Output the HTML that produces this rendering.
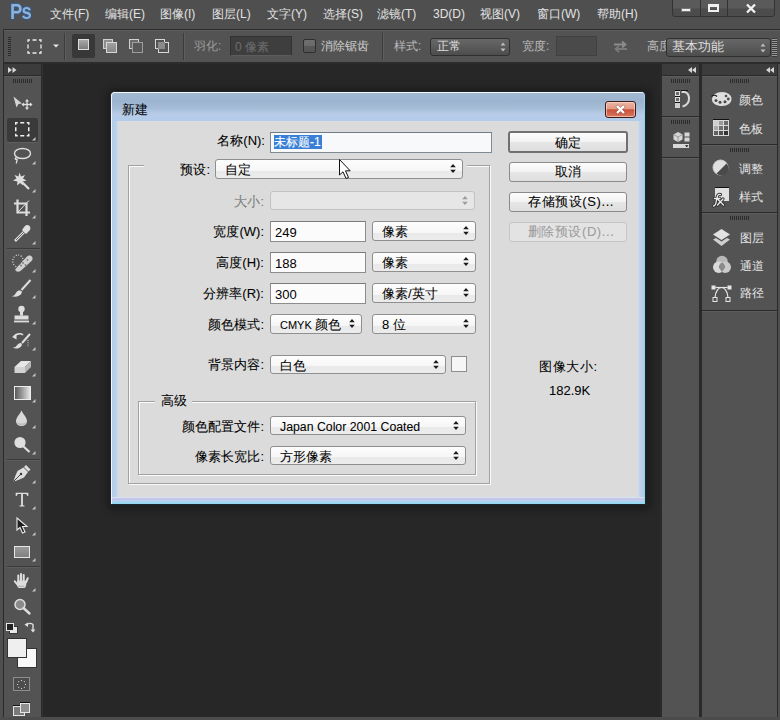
<!DOCTYPE html>
<html><head><meta charset="utf-8"><style>
*{margin:0;padding:0;box-sizing:border-box}
html,body{width:780px;height:720px;overflow:hidden;background:#4f4f4f;font-family:"Liberation Sans",sans-serif;}
.a{position:absolute}
.t{position:absolute;white-space:nowrap;line-height:1}
.mi{position:absolute;top:8px;font-size:12px;color:#e2e2e2;line-height:12px;white-space:nowrap}
.ot{position:absolute;font-size:12px;line-height:12px;color:#c4c4c4;white-space:nowrap}
.lbl{position:absolute;font-size:13px;line-height:13px;color:#000;text-align:right;white-space:nowrap;-webkit-text-stroke:0.08px #000}
.dt{position:absolute;font-size:13px;line-height:13px;color:#000;white-space:nowrap;-webkit-text-stroke:0.05px #000}
.lat{font-size:12px;-webkit-text-stroke:0}
.inp{position:absolute;background:#fbfbfb;border:1px solid #8c8c8c;border-top-color:#7a7a7a}
.sel{position:absolute;border:1px solid #8f8f8f;border-radius:3px;background:linear-gradient(#fdfdfd 0%,#f6f6f6 60%,#e9e9e9 62%,#ececec 100%)}
.btn{position:absolute;border:1px solid #8a8a8a;border-radius:3px;background:linear-gradient(#fcfcfc 0%,#f2f2f2 50%,#e6e6e6 51%,#dfdfdf 100%)}
.grp{position:absolute;border:1px solid #a2a2a2;box-shadow:inset 1px 1px 0 #fafafa,1px 1px 0 #fafafa}
.pl{position:absolute;font-size:12px;line-height:12px;color:#e4e4e4;white-space:nowrap}
svg{position:absolute;overflow:visible}
</style></head><body>
<div class="t" style="left:10px;top:2px;font-size:21.5px;font-weight:bold;color:#8cb0da;letter-spacing:-1px;transform:scaleX(0.86);text-shadow:1px 0 0 #2f5683,-1px 0 0 #2f5683,0 1px 0 #2f5683,0 -1px 0 #3b628e;transform-origin:0 0">Ps</div>
<div class="mi" style="left:50px">文件(F)</div>
<div class="mi" style="left:105px">编辑(E)</div>
<div class="mi" style="left:160px">图像(I)</div>
<div class="mi" style="left:212px">图层(L)</div>
<div class="mi" style="left:267px">文字(Y)</div>
<div class="mi" style="left:323px">选择(S)</div>
<div class="mi" style="left:377px">滤镜(T)</div>
<div class="mi" style="left:433px">3D(D)</div>
<div class="mi" style="left:480px">视图(V)</div>
<div class="mi" style="left:537px">窗口(W)</div>
<div class="mi" style="left:597px">帮助(H)</div>
<div class="a" style="left:672px;top:-1px;width:103px;height:18px;border:1px solid #333;border-radius:0 0 3px 3px;background:linear-gradient(#5a5a5a 0,#5a5a5a 8px,#4c4c4c 9px,#4c4c4c 100%)"></div>
<div class="a" style="left:700px;top:0px;width:1px;height:16px;background:#333"></div>
<div class="a" style="left:727px;top:0px;width:1px;height:16px;background:#333"></div>
<div class="a" style="left:681px;top:8px;width:10px;height:4px;background:#f0f0f0;border:1px solid #777"></div>
<div class="a" style="left:708px;top:4px;width:11px;height:8px;border:2px solid #f0f0f0;border-top-width:3px"></div>
<svg style="left:745px;top:3px;" width="12" height="11" viewBox="0 0 12 11"><path d="M2 1.5L10 9.5M10 1.5L2 9.5" stroke="#f2f2f2" stroke-width="2.4"/></svg>
<div class="a" style="left:3px;top:29px;width:777px;height:35px;background:#535353;border-top:1px solid #2c2c2c;border-left:1px solid #2c2c2c;border-bottom:2px solid #2c2c2c;box-shadow:inset 0 1px 0 #5d5d5d"></div>
<div class="a" style="left:8px;top:37px;width:3px;height:20px;background:repeating-linear-gradient(#2a2a2a 0 1px,transparent 1px 2px)"></div>
<svg style="left:27px;top:39px;" width="15" height="15" viewBox="0 0 15 15"><rect x="1" y="1" width="13" height="13" fill="none" stroke="#ececec" stroke-width="1.3" stroke-dasharray="4 2.5" stroke-dashoffset="2"/></svg>
<svg style="left:53px;top:44px;" width="6" height="4" viewBox="0 0 6 4"><path d="M0 0.5H6L3 3.5Z" fill="#e6e6e6"/></svg>
<div class="a" style="left:64px;top:33px;width:1px;height:27px;background:#3c3c3c;box-shadow:1px 0 0 #5e5e5e"></div>
<div class="a" style="left:72px;top:34px;width:23px;height:24px;background:#383838;border-radius:2px"></div>
<div class="a" style="left:78px;top:39px;width:11px;height:11px;border:1px solid #dedede;background:linear-gradient(#a8a8a8,#7c7c7c)"></div>
<div class="a" style="left:103px;top:39px;width:10px;height:10px;border:1px solid #d0d0d0;background:#8e8e8e"></div>
<div class="a" style="left:106px;top:42px;width:11px;height:11px;border:1px solid #d8d8d8;background:linear-gradient(#a0a0a0,#888)"></div>
<div class="a" style="left:129px;top:39px;width:10px;height:10px;border:1px solid #d0d0d0;background:#6c6c6c"></div>
<div class="a" style="left:132px;top:42px;width:11px;height:11px;border:1px solid #9c9c9c;background:#585858"></div>
<div class="a" style="left:155px;top:39px;width:10px;height:10px;border:1px solid #d8d8d8"></div>
<div class="a" style="left:158px;top:42px;width:11px;height:11px;border:1px solid #d8d8d8"></div>
<div class="a" style="left:158px;top:42px;width:7px;height:7px;background:#8a8a8a"></div>
<div class="a" style="left:183px;top:33px;width:1px;height:27px;background:#3c3c3c;box-shadow:1px 0 0 #5e5e5e"></div>
<div class="ot" style="left:194px;top:40px;color:#9c9c9c">羽化:</div>
<div class="a" style="left:230px;top:36px;width:62px;height:20px;background:#3e3e3e;border:1px solid #323232;border-bottom-color:#5c5c5c"></div>
<div class="ot" style="left:235px;top:41px;color:#6c6c6c">0 像素</div>
<div class="a" style="left:303px;top:39px;width:13px;height:14px;border:1px solid #2e2e2e;border-radius:2px;background:linear-gradient(#6e6e6e 0,#6a6a6a 50%,#575757 51%,#555 100%)"></div>
<div class="ot" style="left:321px;top:40px;color:#d0d0d0">消除锯齿</div>
<div class="a" style="left:382px;top:33px;width:1px;height:27px;background:#3c3c3c;box-shadow:1px 0 0 #5e5e5e"></div>
<div class="ot" style="left:394px;top:40px;color:#bababa">样式:</div>
<div class="a" style="left:430px;top:38px;width:80px;height:18px;border:1px solid #2f2f2f;border-radius:3px;background:linear-gradient(#676767,#4d4d4d)"></div>
<div class="ot" style="left:437px;top:40px;color:#dedede">正常</div>
<svg style="left:500px;top:42px;" width="6" height="10" viewBox="0 0 6 10"><path d="M3 0.5L5.5 3.5H0.5Z M3 9.5L5.5 6.5H0.5Z" fill="#bdbdbd"/></svg>
<div class="ot" style="left:522px;top:40px;color:#bababa">宽度:</div>
<div class="a" style="left:556px;top:36px;width:41px;height:20px;background:#4a4a4a;border:1px solid #404040"></div>
<svg style="left:613px;top:40px;" width="15" height="13" viewBox="0 0 15 13"><path d="M1 4.5H12M9 1.5L12.5 4.5L9 7.5" fill="none" stroke="#8c8c8c" stroke-width="1.8"/><path d="M14 9H3M6 6L2.5 9L6 12" fill="none" stroke="#7a7a7a" stroke-width="1.8"/></svg>
<div class="ot" style="left:647px;top:40px;color:#bababa">高度</div>
<div class="a" style="left:666px;top:38px;width:105px;height:19px;border:1px solid #2f2f2f;border-radius:3px;background:linear-gradient(#676767,#4d4d4d)"></div>
<div class="ot" style="left:672px;top:40px;color:#dedede;font-size:13px;line-height:13px">基本功能</div>
<svg style="left:760px;top:43px;" width="6" height="10" viewBox="0 0 6 10"><path d="M3 0.5L5.5 3.5H0.5Z M3 9.5L5.5 6.5H0.5Z" fill="#bdbdbd"/></svg>
<div class="a" style="left:772px;top:38px;width:5px;height:19px;background:repeating-linear-gradient(#3a3a3a 0 1px,#9a9a9a 1px 2px)"></div>
<div class="a" style="left:41px;top:64px;width:620px;height:653px;background:#272727"></div>
<div class="a" style="left:42px;top:64px;width:1px;height:653px;background:#323232"></div>
<div class="a" style="left:3px;top:64px;width:39px;height:654px;background:#2a2a2a"></div>
<div class="a" style="left:4px;top:64px;width:37px;height:11px;background:#3c3c3c"></div>
<svg style="left:8px;top:67px;" width="9" height="6" viewBox="0 0 9 6"><path d="M0 0L4 3L0 6Z M4.5 0L8.5 3L4.5 6Z" fill="#d6d6d6"/></svg>
<div class="a" style="left:4px;top:76px;width:37px;height:641px;background:#535353;border-top:1px solid #5d5d5d"></div>
<div class="a" style="left:13px;top:79px;width:19px;height:4px;background:repeating-linear-gradient(90deg,#2c2c2c 0 1px,transparent 1px 2px)"></div>
<svg style="left:13px;top:96px;" width="20" height="15" viewBox="0 0 20 15"><path d="M0.5 0.5L9 7.5L5.5 8L3.5 11.5Z" fill="#d4d4d4"/><path d="M14 4V13M9.5 8.5H18.5" stroke="#dedede" stroke-width="1.3"/><path d="M14 3L12 5.5H16Z M14 14L12 11.5H16Z M8.5 8.5L11 6.5V10.5Z M19.5 8.5L17 6.5V10.5Z" fill="#dedede"/></svg>
<div class="a" style="left:7px;top:118px;width:31px;height:24px;background:#3a3a3a;border-radius:2px;box-shadow:0 1px 0 #5f5f5f"></div>
<svg style="left:15px;top:122px;" width="15" height="15" viewBox="0 0 15 15"><rect x="0.75" y="0.75" width="13" height="13" fill="none" stroke="#f0f0f0" stroke-width="1.5" stroke-dasharray="4 2.5" stroke-dashoffset="2"/></svg>
<svg style="left:32px;top:137px;" width="4" height="4" viewBox="0 0 4 4"><path d="M3.5 0V3.5H0Z" fill="#c4c4c4"/></svg>
<svg style="left:12px;top:147px;" width="20" height="18" viewBox="0 0 20 18"><ellipse cx="10.5" cy="6.5" rx="8" ry="5" fill="none" stroke="#dedede" stroke-width="1.4"/><path d="M4 10.5C2 12 4.5 13.5 5 12C5.5 14 4 15 4.5 16.5" fill="none" stroke="#dedede" stroke-width="1.3"/></svg>
<svg style="left:32px;top:161px;" width="4" height="4" viewBox="0 0 4 4"><path d="M3.5 0V3.5H0Z" fill="#c4c4c4"/></svg>
<svg style="left:12px;top:172px;" width="22" height="20" viewBox="0 0 22 20"><path d="M7.5 0.5L9 4.5L13 3L11 6.5L14.5 8.5L10.5 9.5L11 13.5L8 11L5 13.5L5.5 9.5L1 8.5L4.5 6.5L2.5 3L6.5 4.5Z" fill="#dedede"/><path d="M10 10L17 17" stroke="#dedede" stroke-width="2.2"/></svg>
<svg style="left:32px;top:189px;" width="4" height="4" viewBox="0 0 4 4"><path d="M3.5 0V3.5H0Z" fill="#c4c4c4"/></svg>
<svg style="left:13px;top:199px;" width="18" height="18" viewBox="0 0 18 18"><path d="M4.5 0.5V13.5H17M1 4.5H13.5V17" fill="none" stroke="#dedede" stroke-width="2.2"/><path d="M5 13L16 1.5" stroke="#dedede" stroke-width="1"/></svg>
<svg style="left:32px;top:215px;" width="4" height="4" viewBox="0 0 4 4"><path d="M3.5 0V3.5H0Z" fill="#c4c4c4"/></svg>
<svg style="left:13px;top:224px;" width="19" height="20" viewBox="0 0 19 20"><path d="M2 17L11 8" stroke="#dedede" stroke-width="2.6"/><path d="M3 16L11 8" stroke="#535353" stroke-width="0.9"/><path d="M9 6L13 10L16.5 6.5C18 5 17.5 2.5 16 1.5C14.5 0.5 12.5 1 11.5 2.5Z" fill="#dedede"/></svg>
<svg style="left:32px;top:241px;" width="4" height="4" viewBox="0 0 4 4"><path d="M3.5 0V3.5H0Z" fill="#c4c4c4"/></svg>
<div class="a" style="left:7px;top:248px;width:33px;height:1px;background:#3a3a3a;box-shadow:0 1px 0 #5c5c5c"></div>
<svg style="left:12px;top:254px;" width="22" height="18" viewBox="0 0 22 18"><ellipse cx="6" cy="7" rx="5.2" ry="6" fill="none" stroke="#dedede" stroke-width="1.2" stroke-dasharray="1 1.6"/><path d="M4 14.5L15 2.5C16.5 1 19 1.5 20 2.8C21 4 20.8 5.8 19.5 7L8.5 17C7 18.2 4.8 18 3.8 16.8C3 15.8 3.2 15.3 4 14.5Z" fill="#cfcfcf"/><g fill="#7a7a7a"><circle cx="11" cy="9" r="0.9"/><circle cx="13.5" cy="11" r="0.9"/><circle cx="9" cy="11.5" r="0.9"/><circle cx="15.5" cy="6" r="0.9"/></g></svg>
<svg style="left:32px;top:269px;" width="4" height="4" viewBox="0 0 4 4"><path d="M3.5 0V3.5H0Z" fill="#c4c4c4"/></svg>
<svg style="left:11px;top:279px;" width="22" height="19" viewBox="0 0 22 19"><path d="M19.5 1L10.5 11" stroke="#dedede" stroke-width="2"/><path d="M9 11.5C6 11 5 14 4 15.5C3 16.8 1.5 17 0.5 17C4 18.5 9 17.5 10.5 14.5C11.5 12.8 10.5 11.5 9 11.5Z" fill="#dedede"/></svg>
<svg style="left:32px;top:295px;" width="4" height="4" viewBox="0 0 4 4"><path d="M3.5 0V3.5H0Z" fill="#c4c4c4"/></svg>
<svg style="left:13px;top:305px;" width="18" height="19" viewBox="0 0 18 19"><circle cx="8.5" cy="4" r="3.2" fill="#dedede"/><path d="M7 6H10V10.5H7Z" fill="#dedede"/><path d="M1.5 10.5H15.5V14.5H1.5Z" fill="#dedede"/><path d="M1 16.5H16" stroke="#dedede" stroke-width="1.8"/></svg>
<svg style="left:32px;top:321px;" width="4" height="4" viewBox="0 0 4 4"><path d="M3.5 0V3.5H0Z" fill="#c4c4c4"/></svg>
<svg style="left:11px;top:332px;" width="22" height="18" viewBox="0 0 22 18"><path d="M3 4.5C5 1.5 10 1 12 3" fill="none" stroke="#dedede" stroke-width="1.6"/><path d="M1 5L5.5 2V7.5Z" fill="#dedede"/><path d="M19 2L11 11" stroke="#dedede" stroke-width="2"/><path d="M9.5 11C7 11 6 13.5 5 14.5C4 15.5 2.8 15.8 1.5 15.5C4.5 17.5 9 16.5 10.5 14C11.3 12.5 10.8 11 9.5 11Z" fill="#dedede"/><path d="M17 8V15" stroke="#dedede" stroke-width="1" stroke-dasharray="1 1.3"/></svg>
<svg style="left:32px;top:347px;" width="4" height="4" viewBox="0 0 4 4"><path d="M3.5 0V3.5H0Z" fill="#c4c4c4"/></svg>
<svg style="left:13px;top:358px;" width="20" height="17" viewBox="0 0 20 17"><path d="M1.5 9L8 3H18L12 9Z" fill="#e6e6e6"/><path d="M1.5 9H12V15H1.5Z" fill="#d2d2d2"/><path d="M12 9L18 3V9L12 15Z" fill="#b6b6b6"/></svg>
<svg style="left:32px;top:373px;" width="4" height="4" viewBox="0 0 4 4"><path d="M3.5 0V3.5H0Z" fill="#c4c4c4"/></svg>
<div class="a" style="left:14px;top:386px;width:17px;height:14px;border:1.5px solid #ececec;background:linear-gradient(90deg,#5a5a5a,#9e9e9e 50%,#e6e6e6)"></div>
<svg style="left:32px;top:399px;" width="4" height="4" viewBox="0 0 4 4"><path d="M3.5 0V3.5H0Z" fill="#c4c4c4"/></svg>
<svg style="left:15px;top:410px;" width="13" height="17" viewBox="0 0 13 17"><path d="M6.5 0.5C5 4 1 7.5 1 11C1 14 3.5 16 6.5 16C9.5 16 12 14 12 11C12 7.5 8 4 6.5 0.5Z" fill="#d8d8d8"/><path d="M2 11.5C3 14 10 14 11 11.5C11 14 9 15.5 6.5 15.5C4 15.5 2 14 2 11.5Z" fill="#bdbdbd"/></svg>
<svg style="left:32px;top:425px;" width="4" height="4" viewBox="0 0 4 4"><path d="M3.5 0V3.5H0Z" fill="#c4c4c4"/></svg>
<svg style="left:14px;top:436px;" width="18" height="18" viewBox="0 0 18 18"><circle cx="6" cy="6.5" r="5.6" fill="#dedede"/><path d="M9 10L15.5 16" stroke="#dedede" stroke-width="2.2"/></svg>
<svg style="left:32px;top:451px;" width="4" height="4" viewBox="0 0 4 4"><path d="M3.5 0V3.5H0Z" fill="#c4c4c4"/></svg>
<div class="a" style="left:7px;top:459px;width:33px;height:1px;background:#3a3a3a;box-shadow:0 1px 0 #5c5c5c"></div>
<svg style="left:12px;top:464px;" width="20" height="19" viewBox="0 0 20 19"><path d="M14 1L18.5 5.5L16.5 7.5L12 3Z" fill="#dedede"/><path d="M11.5 3.5L16 8L12 13.5C9 15 5 16.5 1.5 17.5C2.5 14 4 10 5.5 7Z" fill="#dedede"/><path d="M1.5 17.5L8.5 10.5" stroke="#444" stroke-width="1"/><circle cx="9" cy="10" r="1.2" fill="#333"/></svg>
<svg style="left:32px;top:480px;" width="4" height="4" viewBox="0 0 4 4"><path d="M3.5 0V3.5H0Z" fill="#c4c4c4"/></svg>
<svg style="left:15px;top:492px;" width="14" height="15" viewBox="0 0 14 15"><path d="M0.7 0.7H13.3V4H12.3C12 2.5 11.5 1.9 10 1.9H7.9V12.8C7.9 13.3 8.3 13.5 9.5 13.6V14.4H4.5V13.6C5.7 13.5 6.1 13.3 6.1 12.8V1.9H4C2.5 1.9 2 2.5 1.7 4H0.7Z" fill="#dedede"/></svg>
<svg style="left:32px;top:506px;" width="4" height="4" viewBox="0 0 4 4"><path d="M3.5 0V3.5H0Z" fill="#c4c4c4"/></svg>
<svg style="left:16px;top:517px;" width="12" height="17" viewBox="0 0 12 17"><path d="M1 1V13L4 10.5L6.5 16L9 15L6.5 9.5H11Z" fill="#1e1e1e" stroke="#e8e8e8" stroke-width="1.1"/></svg>
<svg style="left:32px;top:532px;" width="4" height="4" viewBox="0 0 4 4"><path d="M3.5 0V3.5H0Z" fill="#c4c4c4"/></svg>
<div class="a" style="left:14px;top:546px;width:16px;height:12px;border:1.5px solid #e6e6e6;background:linear-gradient(#999,#808080)"></div>
<svg style="left:32px;top:558px;" width="4" height="4" viewBox="0 0 4 4"><path d="M3.5 0V3.5H0Z" fill="#c4c4c4"/></svg>
<div class="a" style="left:7px;top:566px;width:33px;height:1px;background:#3a3a3a;box-shadow:0 1px 0 #5c5c5c"></div>
<svg style="left:13px;top:572px;" width="18" height="18" viewBox="0 0 18 18"><g stroke="#dedede" stroke-width="2" stroke-linecap="round"><path d="M5.3 9V3.5M8 8.5V2M10.7 8.5V3M13.2 10L14.8 6.2M4.5 12.5L1.8 9.3"/></g><path d="M4.2 8.5H13.8L13 14C12.6 15.3 12 16 11 16H6C5 16 4.5 15 4 13.5Z" fill="#dedede"/><path d="M5 14.3H11.5" stroke="#9a9a9a" stroke-width="0.8"/></svg>
<svg style="left:32px;top:588px;" width="4" height="4" viewBox="0 0 4 4"><path d="M3.5 0V3.5H0Z" fill="#c4c4c4"/></svg>
<svg style="left:14px;top:598px;" width="18" height="18" viewBox="0 0 18 18"><circle cx="6" cy="6.5" r="5" fill="#8a8a8a" stroke="#dedede" stroke-width="1.5"/><path d="M9.5 10L15.5 15.5" stroke="#dedede" stroke-width="2.4" stroke-linecap="round"/></svg>
<div class="a" style="left:9px;top:626px;width:9px;height:8px;background:#e8e8e8;border:1px solid #3a3a3a"></div>
<div class="a" style="left:6px;top:623px;width:8px;height:8px;background:#222;border:1.5px solid #e6e6e6"></div>
<svg style="left:24px;top:621px;" width="12" height="12" viewBox="0 0 12 12"><path d="M2 4.5C4 2 7 2 9 3.5V9" fill="none" stroke="#dedede" stroke-width="1.4"/><path d="M0.5 3.5L4 1.5V6Z M9 11.5L6.5 8.5H11.5Z" fill="#dedede"/></svg>
<div class="a" style="left:17px;top:648px;width:20px;height:20px;background:#f8f8f8;border:1px solid #333"></div>
<div class="a" style="left:7px;top:638px;width:20px;height:20px;background:#efefef;border:1px solid #333"></div>
<div class="a" style="left:13px;top:677px;width:17px;height:14px;background:#4c4c4c;border:1px solid #8e8e8e"></div>
<svg style="left:16px;top:679px;" width="11" height="11" viewBox="0 0 11 11"><g fill="#dcdcdc"><rect x="9.00" y="5.00" width="1" height="1"/><rect x="7.83" y="7.83" width="1" height="1"/><rect x="5.00" y="9.00" width="1" height="1"/><rect x="2.17" y="7.83" width="1" height="1"/><rect x="1.00" y="5.01" width="1" height="1"/><rect x="2.17" y="2.18" width="1" height="1"/><rect x="4.99" y="1.00" width="1" height="1"/><rect x="7.82" y="2.16" width="1" height="1"/></g></svg>
<div class="a" style="left:20px;top:703px;width:10px;height:10px;border:1.5px solid #e6e6e6;background:#8a8a8a;box-shadow:0 -1px 0 #111"></div>
<div class="a" style="left:13px;top:706px;width:12px;height:10px;border:1.5px solid #e6e6e6;background:#7a7a7a;box-shadow:0 -1px 0 #111"></div>
<div class="a" style="left:20px;top:703px;width:10px;height:10px;border:1.5px solid #e6e6e6;background:#8f8f8f"></div>
<div class="a" style="left:660px;top:64px;width:118px;height:654px;background:#2a2a2a"></div>
<div class="a" style="left:662px;top:64px;width:37px;height:11px;background:#3c3c3c"></div>
<div class="a" style="left:702px;top:64px;width:75px;height:11px;background:#3c3c3c"></div>
<svg style="left:688px;top:67px;" width="8" height="6" viewBox="0 0 8 6"><path d="M4 0L0 3L4 6Z M8 0L4 3L8 6Z" fill="#d6d6d6"/></svg>
<svg style="left:766px;top:67px;" width="8" height="6" viewBox="0 0 8 6"><path d="M4 0L0 3L4 6Z M8 0L4 3L8 6Z" fill="#d6d6d6"/></svg>
<div class="a" style="left:662px;top:76px;width:37px;height:40px;background:#535353;border-top:1px solid #5d5d5d"></div>
<div class="a" style="left:671px;top:79px;width:19px;height:4px;background:repeating-linear-gradient(90deg,#2c2c2c 0 1px,transparent 1px 2px)"></div>
<div class="a" style="left:662px;top:117px;width:37px;height:40px;background:#535353;border-top:1px solid #5d5d5d"></div>
<div class="a" style="left:671px;top:120px;width:19px;height:4px;background:repeating-linear-gradient(90deg,#2c2c2c 0 1px,transparent 1px 2px)"></div>
<div class="a" style="left:662px;top:158px;width:37px;height:559px;background:#535353;border-top:1px solid #5d5d5d"></div>
<div class="a" style="left:702px;top:76px;width:75px;height:68px;background:#535353;border-top:1px solid #5d5d5d"></div>
<div class="a" style="left:730px;top:79px;width:19px;height:4px;background:repeating-linear-gradient(90deg,#2c2c2c 0 1px,transparent 1px 2px)"></div>
<div class="a" style="left:702px;top:145px;width:75px;height:67px;background:#535353;border-top:1px solid #5d5d5d"></div>
<div class="a" style="left:730px;top:148px;width:19px;height:4px;background:repeating-linear-gradient(90deg,#2c2c2c 0 1px,transparent 1px 2px)"></div>
<div class="a" style="left:702px;top:213px;width:75px;height:97px;background:#535353;border-top:1px solid #5d5d5d"></div>
<div class="a" style="left:730px;top:216px;width:19px;height:4px;background:repeating-linear-gradient(90deg,#2c2c2c 0 1px,transparent 1px 2px)"></div>
<div class="a" style="left:702px;top:311px;width:75px;height:406px;background:#535353;border-top:1px solid #5d5d5d"></div>
<div class="a" style="left:675px;top:91px;width:5px;height:5px;border:1px solid #e0e0e0;background:#6a6a6a;box-shadow:0 -1px 0 #111"></div>
<div class="a" style="left:675px;top:97px;width:5px;height:5px;border:1px solid #e0e0e0;background:#6a6a6a;box-shadow:0 -1px 0 #111"></div>
<div class="a" style="left:675px;top:103px;width:5px;height:5px;background:#cfcfcf;box-shadow:0 -1px 0 #111"></div>
<svg style="left:680px;top:89px;" width="11" height="20" viewBox="0 0 11 20"><path d="M1 1.5H8" stroke="#151515" stroke-width="1"/><path d="M1.5 3H5C7.5 4 9 6.5 9 9.5C9 13.5 6 16.5 2.5 17.5" fill="none" stroke="#d8d8d8" stroke-width="2"/></svg>
<svg style="left:673px;top:131px;" width="19" height="18" viewBox="0 0 19 18"><path d="M5 1L9.5 3.5V8.5L5 11L0.5 8.5V3.5Z" fill="#d6d6d6"/><path d="M5 6V11M0.5 3.5L5 6L9.5 3.5" stroke="#8a8a8a" stroke-width="0.8" fill="none"/><rect x="11.5" y="1.5" width="5" height="4" fill="#d6d6d6"/><rect x="11.5" y="6.5" width="5" height="4" fill="#d6d6d6"/><rect x="0" y="13" width="16" height="4" fill="#d8d8d8"/><path d="M12 14.2H15.5L13.75 16.2Z" fill="#111"/></svg>
<svg style="left:711px;top:91px;" width="21" height="16" viewBox="0 0 21 16"><path d="M1 8.5C1 4 5.5 1 11 1C16.5 1 20.5 4 20.5 8C20.5 12 16.5 15 11 15C5.5 15 1 12.5 1 8.5Z" fill="#dedede"/><path d="M0.5 5.5C2 4 4.5 4 6 5.5" fill="none" stroke="#1c1c1c" stroke-width="1.2"/><g fill="#4a4a4a"><circle cx="5" cy="9.5" r="1.5"/><circle cx="9" cy="11.3" r="1.5"/><circle cx="14" cy="10.8" r="1.5"/><circle cx="17.3" cy="8" r="1.4"/><circle cx="15" cy="5" r="1.3"/></g></svg>
<div class="pl" style="left:739px;top:94px">颜色</div>
<div class="a" style="left:713px;top:119px;width:16px;height:17px;background:#d8d8d8;border-top:1px solid #111"></div>
<div class="a" style="left:714px;top:121px;width:4px;height:4px;background:#d0d0d0"></div>
<div class="a" style="left:719px;top:121px;width:4px;height:4px;background:#9a9a9a"></div>
<div class="a" style="left:724px;top:121px;width:4px;height:4px;background:#6a6a6a"></div>
<div class="a" style="left:714px;top:126px;width:4px;height:4px;background:#a8a8a8"></div>
<div class="a" style="left:719px;top:126px;width:4px;height:4px;background:#707070"></div>
<div class="a" style="left:724px;top:126px;width:4px;height:4px;background:#5a5a5a"></div>
<div class="a" style="left:714px;top:131px;width:4px;height:4px;background:#606060"></div>
<div class="a" style="left:719px;top:131px;width:4px;height:4px;background:#505050"></div>
<div class="a" style="left:724px;top:131px;width:4px;height:4px;background:#333333"></div>
<div class="pl" style="left:739px;top:123px">色板</div>
<svg style="left:712px;top:159px;" width="17" height="17" viewBox="0 0 17 17"><circle cx="8.5" cy="8.5" r="7.5" fill="#e0e0e0" stroke="#cfcfcf" stroke-width="1"/><path d="M14.5 4.5A6.3 6.3 0 0 1 4.5 14.5Z" fill="#4a4a4a"/></svg>
<div class="pl" style="left:739px;top:163px">调整</div>
<div class="a" style="left:715px;top:187px;width:14px;height:14px;background:#e0e0e0;border-top:1px solid #111"></div>
<svg style="left:708px;top:182px;" width="20" height="28" viewBox="0 0 20 28"><g fill="none" stroke-linecap="round"><path d="M5.5 24C7 24 8 22 8.5 18L9.5 14C10 12.5 11 12 12.5 12.5M6.5 16.5H12M9.5 17L15.5 23M15 17L9.5 23" stroke="#333" stroke-width="3.2"/><path d="M5.5 24C7 24 8 22 8.5 18L9.5 14C10 12.5 11 12 12.5 12.5M6.5 16.5H12M9.5 17L15.5 23M15 17L9.5 23" stroke="#ececec" stroke-width="1.3"/></g></svg>
<div class="pl" style="left:739px;top:191px">样式</div>
<svg style="left:712px;top:228px;" width="19" height="19" viewBox="0 0 19 19"><path d="M1 11.5L4 10L9.5 13.5L15 10L18 11.5L9.5 18Z" fill="#cfcfcf"/><path d="M1 6.5L9.5 1L18 6.5L9.5 12Z" fill="#e2e2e2"/></svg>
<div class="pl" style="left:740px;top:232px">图层</div>
<svg style="left:713px;top:255px;" width="18" height="19" viewBox="0 0 18 19"><circle cx="9" cy="6.5" r="5.8" fill="#b8b8b8" stroke="#2a2a2a" stroke-width="0.8" stroke-dasharray="0 3 12 40"/><circle cx="5.8" cy="12.2" r="5.8" fill="#dadada"/><circle cx="12.2" cy="12.2" r="5.8" fill="#cacaca"/><path d="M9 7.5C7 8.5 6 10 5.8 12.5C7 14 8 15.5 9 17C10 15.5 11 14 12.2 12.5C12 10 11 8.5 9 7.5Z" fill="#8a8a8a"/></svg>
<div class="pl" style="left:740px;top:260px">通道</div>
<svg style="left:711px;top:285px;" width="22" height="17" viewBox="0 0 22 17"><rect x="0.5" y="0.5" width="4" height="4" fill="#e6e6e6"/><rect x="16.5" y="0.5" width="4" height="4" fill="#e6e6e6"/><path d="M4.5 2.5H16.5" stroke="#e6e6e6" stroke-width="1.2"/><path d="M4 12.5C4.5 6 7.5 2.5 10.5 2.5C13.5 2.5 16.5 6 17 12.5" fill="none" stroke="#e6e6e6" stroke-width="1.2"/><rect x="2" y="12.5" width="4" height="4" fill="none" stroke="#e6e6e6" stroke-width="1"/><rect x="15" y="12.5" width="4" height="4" fill="none" stroke="#e6e6e6" stroke-width="1"/></svg>
<div class="pl" style="left:740px;top:287px">路径</div>
<div class="a" style="left:106px;top:88px;width:546px;height:423px;border-radius:8px;background:rgba(0,0,0,0.25);filter:blur(3px)"></div>
<div class="a" style="left:110px;top:91px;width:536px;height:414px;border:1px solid #1c242c;border-radius:5px 5px 0 0;background:#b8cfe8"></div>
<div class="a" style="left:111px;top:92px;width:534px;height:412px;border-radius:4px 4px 0 0;box-shadow:inset 1px 1px 0 #f2f7fc;"></div>
<div class="a" style="left:112px;top:93px;width:532px;height:28px;border-radius:3px 3px 0 0;background:linear-gradient(#a2b9d3 0%,#9cb4cf 30%,#a6bdd8 55%,#b8cbe7 75%,#b1cdec 100%)"></div>
<div class="a" style="left:112px;top:121px;width:6px;height:376px;background:linear-gradient(90deg,#b3cbe6,#bcd2ea 70%,#cadcee)"></div>
<div class="a" style="left:638px;top:121px;width:6px;height:376px;background:linear-gradient(90deg,#d2e0ee,#bcd2ea 30%,#b3cbe6)"></div>
<div class="a" style="left:112px;top:497px;width:532px;height:7px;background:linear-gradient(#d4e2ee 0,#d4e2ee 1px,#c4c6ee 1px,#c4c6ee 3px,#b4d4ec 4px,#8cd8f2 7px)"></div>
<div class="a" style="left:111px;top:97px;width:1px;height:407px;background:#f4f8fc"></div>
<div class="a" style="left:644px;top:97px;width:1px;height:407px;background:#8fd4e6"></div>
<div class="dt" style="left:122px;top:103px">新建</div>
<div class="a" style="left:605px;top:101px;width:31px;height:17px;border:1px solid #3b1c16;border-radius:3px;background:linear-gradient(#ebb5a6 0%,#e39a86 45%,#c9523c 52%,#d8775f 100%);box-shadow:inset 0 0 0 1px rgba(255,225,215,0.6)"></div>
<svg style="left:614px;top:104px;" width="13" height="11" viewBox="0 0 13 11"><path d="M2.5 1.5L10.5 9.5M10.5 1.5L2.5 9.5" stroke="#5a2a22" stroke-width="3.6" opacity=".35"/><path d="M3 2L10 9M10 2L3 9" stroke="#fff" stroke-width="2.4"/></svg>
<div class="a" style="left:118px;top:121px;width:520px;height:376px;background:#dbdbdb"></div>
<div class="lbl" style="right:515px;top:134px;color:#000">名称(N):</div>
<div class="a" style="left:270px;top:132px;width:222px;height:21px;border:1px solid #7f8a95;border-top-color:#6f7b87;background:#f7f9fb"></div>
<div class="a" style="left:274px;top:135px;width:48px;height:14px;background:#3a7fd6"></div>
<div class="dt" style="left:274px;top:136px;color:#fff;-webkit-text-stroke:0.1px #fff;font-size:12px;line-height:12px">未标题-1</div>
<div class="grp" style="left:128px;top:165px;width:362px;height:319px"></div>
<div class="a" style="left:144px;top:158px;width:323px;height:14px;background:#dbdbdb"></div>
<div class="lbl" style="right:570px;top:163px;color:#000">预设:</div>
<div class="sel" style="left:215px;top:159px;width:248px;height:20px;"><div class="dt" style="left:9px;top:3px">自定</div><svg style="right:6px;top:4px" width="6" height="9" viewBox="0 0 6 9"><path d="M3 0L5.8 3.2H0.2Z M3 9L5.8 5.8H0.2Z" fill="#1a1a1a"/></svg></div>
<div class="lbl" style="right:516px;top:195px;color:#8a8a8a">大小:</div>
<div class="a" style="left:270px;top:191px;width:205px;height:19px;border:1px solid #c2c2c2;border-radius:3px;background:#e6e6e6"><svg style="right:6px;top:4px" width="6" height="9" viewBox="0 0 6 9"><path d="M3 0L5.8 3.2H0.2Z M3 9L5.8 5.8H0.2Z" fill="#9a9a9a"/></svg></div>
<div class="lbl" style="right:516px;top:225px;color:#000">宽度(W):</div>
<div class="inp" style="left:270px;top:221px;width:96px;height:21px"><div class="dt lat" style="left:4px;top:4px;font-size:13px">249</div></div>
<div class="sel" style="left:372px;top:221px;width:104px;height:20px;"><div class="dt" style="left:9px;top:3px">像素</div><svg style="right:6px;top:4px" width="6" height="9" viewBox="0 0 6 9"><path d="M3 0L5.8 3.2H0.2Z M3 9L5.8 5.8H0.2Z" fill="#1a1a1a"/></svg></div>
<div class="lbl" style="right:516px;top:256px;color:#000">高度(H):</div>
<div class="inp" style="left:270px;top:252px;width:96px;height:21px"><div class="dt lat" style="left:4px;top:4px;font-size:13px">188</div></div>
<div class="sel" style="left:372px;top:252px;width:104px;height:20px;"><div class="dt" style="left:9px;top:3px">像素</div><svg style="right:6px;top:4px" width="6" height="9" viewBox="0 0 6 9"><path d="M3 0L5.8 3.2H0.2Z M3 9L5.8 5.8H0.2Z" fill="#1a1a1a"/></svg></div>
<div class="lbl" style="right:516px;top:287px;color:#000">分辨率(R):</div>
<div class="inp" style="left:270px;top:283px;width:96px;height:21px"><div class="dt lat" style="left:4px;top:4px;font-size:13px">300</div></div>
<div class="sel" style="left:372px;top:283px;width:104px;height:20px;"><div class="dt" style="left:9px;top:3px">像素/英寸</div><svg style="right:6px;top:4px" width="6" height="9" viewBox="0 0 6 9"><path d="M3 0L5.8 3.2H0.2Z M3 9L5.8 5.8H0.2Z" fill="#1a1a1a"/></svg></div>
<div class="lbl" style="right:516px;top:318px;color:#000">颜色模式:</div>
<div class="sel" style="left:270px;top:314px;width:92px;height:20px;"><div class="dt" style="left:9px;top:3px"><span style="font-size:11px;display:inline-block;width:35px;-webkit-text-stroke:0.05px #000">CMYK</span>颜色</div><svg style="right:6px;top:4px" width="6" height="9" viewBox="0 0 6 9"><path d="M3 0L5.8 3.2H0.2Z M3 9L5.8 5.8H0.2Z" fill="#1a1a1a"/></svg></div>
<div class="sel" style="left:372px;top:314px;width:104px;height:20px;"><div class="dt" style="left:9px;top:3px">8 位</div><svg style="right:6px;top:4px" width="6" height="9" viewBox="0 0 6 9"><path d="M3 0L5.8 3.2H0.2Z M3 9L5.8 5.8H0.2Z" fill="#1a1a1a"/></svg></div>
<div class="lbl" style="right:516px;top:358px;color:#000">背景内容:</div>
<div class="sel" style="left:270px;top:355px;width:176px;height:19px;"><div class="dt" style="left:9px;top:3px">白色</div><svg style="right:6px;top:4px" width="6" height="9" viewBox="0 0 6 9"><path d="M3 0L5.8 3.2H0.2Z M3 9L5.8 5.8H0.2Z" fill="#1a1a1a"/></svg></div>
<div class="a" style="left:451px;top:356px;width:16px;height:16px;border:1px solid #8e8e8e;background:#f6f6f6"></div>
<div class="grp" style="left:138px;top:401px;width:338px;height:74px"></div>
<div class="a" style="left:155px;top:394px;width:37px;height:14px;background:#dbdbdb"></div>
<div class="dt" style="left:161px;top:394px;">高级</div>
<div class="lbl" style="right:516px;top:420px;color:#000">颜色配置文件:</div>
<div class="sel" style="left:270px;top:416px;width:196px;height:19px;"><div class="dt" style="left:9px;top:3px"><span style="font-size:12.3px;-webkit-text-stroke:0.05px #000">Japan Color 2001 Coated</span></div><svg style="right:6px;top:4px" width="6" height="9" viewBox="0 0 6 9"><path d="M3 0L5.8 3.2H0.2Z M3 9L5.8 5.8H0.2Z" fill="#1a1a1a"/></svg></div>
<div class="lbl" style="right:516px;top:450px;color:#000">像素长宽比:</div>
<div class="sel" style="left:270px;top:446px;width:196px;height:19px;"><div class="dt" style="left:9px;top:3px">方形像素</div><svg style="right:6px;top:4px" width="6" height="9" viewBox="0 0 6 9"><path d="M3 0L5.8 3.2H0.2Z M3 9L5.8 5.8H0.2Z" fill="#1a1a1a"/></svg></div>
<div class="btn" style="left:508px;top:131px;width:120px;height:22px;border:2px solid #707070;"><div class="dt" style="left:0;right:0;text-align:center;top:3px;color:#000;-webkit-text-stroke-color:#000">确定</div></div>
<div class="btn" style="left:509px;top:162px;width:118px;height:20px;"><div class="dt" style="left:0;right:0;text-align:center;top:2px;color:#000;-webkit-text-stroke-color:#000">取消</div></div>
<div class="btn" style="left:509px;top:192px;width:118px;height:20px;"><div class="dt" style="left:0;right:0;text-align:center;top:2px;color:#000;-webkit-text-stroke-color:#000"><span style="letter-spacing:0.6px;position:relative;left:3px">存储预设(S)...</span></div></div>
<div class="btn" style="left:509px;top:222px;width:118px;height:20px;border-color:#c6c6c6;background:#e3e3e3;"><div class="dt" style="left:0;right:0;text-align:center;top:2px;color:#9c9c9c;-webkit-text-stroke-color:#9c9c9c"><span style="letter-spacing:0.6px;position:relative;left:3px">删除预设(D)...</span></div></div>
<div class="dt" style="left:539px;top:360px;letter-spacing:0.6px">图像大小:</div>
<div class="dt" style="left:549px;top:384px;-webkit-text-stroke:0.05px #000">182.9K</div>
<svg style="left:338px;top:158px;" width="14" height="22" viewBox="0 0 14 22"><path d="M1.5 1.5V17L5 13.8L8 20.5L10.5 19.5L7.5 12.8H12.2Z" fill="#fff" stroke="#111" stroke-width="1"/></svg>
<div class="a" style="left:0px;top:717px;width:780px;height:3px;background:#4c4c4c"></div>
</body></html>
